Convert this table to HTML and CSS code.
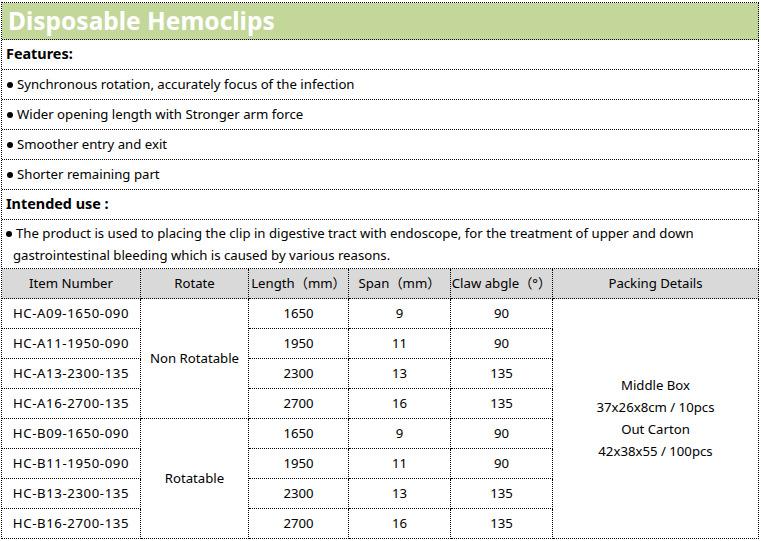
FILE: index.html
```html
<!DOCTYPE html>
<html>
<head>
<meta charset="utf-8">
<link rel="stylesheet" href="styles.css">
</head>
<body>
<div class="sheet">
  <div class="cell title span6"><span>Disposable Hemoclips</span></div>
  <div class="cell section span6"><span>Features:</span></div>
  <div class="cell line span6"><span><i class="dot"></i>Synchronous rotation, accurately focus of the infection</span></div>
  <div class="cell line span6"><span><i class="dot"></i>Wider opening length with Stronger arm force</span></div>
  <div class="cell line span6"><span><i class="dot"></i>Smoother entry and exit</span></div>
  <div class="cell line span6"><span><i class="dot"></i>Shorter remaining part</span></div>
  <div class="cell section span6"><span>Intended use :</span></div>
  <div class="cell para span6">
    <span class="p1"><i class="dot"></i>The product is used to placing the clip in digestive tract with endoscope, for the treatment of upper and down</span>
    <span class="p2">gastrointestinal bleeding which is caused by various reasons.</span>
  </div>

  <div class="cell head"><span>Item Number</span></div>
  <div class="cell head"><span>Rotate</span></div>
  <div class="cell head"><span>Length<span class="fw">（</span>mm<span class="fw">）</span></span></div>
  <div class="cell head"><span>Span<span class="fw">（</span>mm<span class="fw">）</span></span></div>
  <div class="cell head"><span>Claw abgle<span class="fw">（</span>°<span class="fw">）</span></span></div>
  <div class="cell head"><span>Packing Details</span></div>

  <div class="cell c code">HC-A09-1650-090</div>
  <div class="cell c rot-a">Non Rotatable</div>
  <div class="cell c">1650</div>
  <div class="cell c">9</div>
  <div class="cell c">90</div>
  <div class="cell pack">
    <span>Middle Box</span>
    <span>37x26x8cm / 10pcs</span>
    <span>Out Carton</span>
    <span>42x38x55 / 100pcs</span>
  </div>

  <div class="cell c code">HC-A11-1950-090</div>
  <div class="cell c">1950</div>
  <div class="cell c">11</div>
  <div class="cell c">90</div>

  <div class="cell c code">HC-A13-2300-135</div>
  <div class="cell c">2300</div>
  <div class="cell c">13</div>
  <div class="cell c">135</div>

  <div class="cell c code">HC-A16-2700-135</div>
  <div class="cell c">2700</div>
  <div class="cell c">16</div>
  <div class="cell c">135</div>

  <div class="cell c code">HC-B09-1650-090</div>
  <div class="cell c rot-b">Rotatable</div>
  <div class="cell c">1650</div>
  <div class="cell c">9</div>
  <div class="cell c">90</div>

  <div class="cell c code">HC-B11-1950-090</div>
  <div class="cell c">1950</div>
  <div class="cell c">11</div>
  <div class="cell c">90</div>

  <div class="cell c code">HC-B13-2300-135</div>
  <div class="cell c">2300</div>
  <div class="cell c">13</div>
  <div class="cell c">135</div>

  <div class="cell c code">HC-B16-2700-135</div>
  <div class="cell c">2700</div>
  <div class="cell c">16</div>
  <div class="cell c">135</div>
</div>
</body>
</html>
```
FILE: styles.css
```css
html, body {
  margin: 0;
  padding: 0;
  background: #fff;
}
body {
  font-family: "Noto Sans", "Noto Sans CJK SC", sans-serif;
  font-size: 13.2px;
  color: #000;
}
.sheet {
  margin: 2px 0 0 1px;
  width: 758px;
  box-sizing: border-box;
  display: grid;
  grid-template-columns: 139px 108px 100px 102px 102px 206px;
  grid-template-rows: 37px repeat(6, 30px) 49px 30px repeat(8, 30px);
  border-left: 1px dotted #000;
  border-top: 1px dotted #000;
}
.cell {
  box-sizing: border-box;
  border-right: 1px dotted #000;
  border-bottom: 1px dotted #000;
  display: flex;
  align-items: center;
  white-space: nowrap;
  padding-bottom: 2px;
}
.span6 { grid-column: 1 / 7; }
.title {
  background: #c4d79b;
  color: #fff;
  font-weight: 700;
  font-size: 24.5px;
  padding-left: 6px;
  padding-bottom: 1px;
}
.section {
  font-weight: 700;
  font-size: 14.4px;
  padding-left: 4px;
}
.line { padding-left: 5px; }
.dot {
  display: inline-block;
  width: 6px;
  height: 6px;
  border-radius: 50%;
  background: #000;
  margin-right: 4px;
  vertical-align: 1px;
}
.para {
  flex-direction: column;
  align-items: flex-start;
  justify-content: center;
  line-height: 22px;
  padding-bottom: 1px;
}
.p1 { padding-left: 4px; }
.p1 .dot { margin-right: 4px; }
.p2 { padding-left: 11px; }
.head {
  background: #d9d9d9;
  justify-content: center;
}
.fw { font-family: "Noto Sans CJK SC", sans-serif; }
.c { justify-content: center; }
.code { letter-spacing: 0.6px; }
.rot-a { grid-column: 2; grid-row: 10 / span 4; }
.rot-b { grid-column: 2; grid-row: 14 / span 4; }
.pack {
  grid-column: 6;
  grid-row: 10 / span 8;
  flex-direction: column;
  justify-content: center;
  line-height: 22px;
}
```
